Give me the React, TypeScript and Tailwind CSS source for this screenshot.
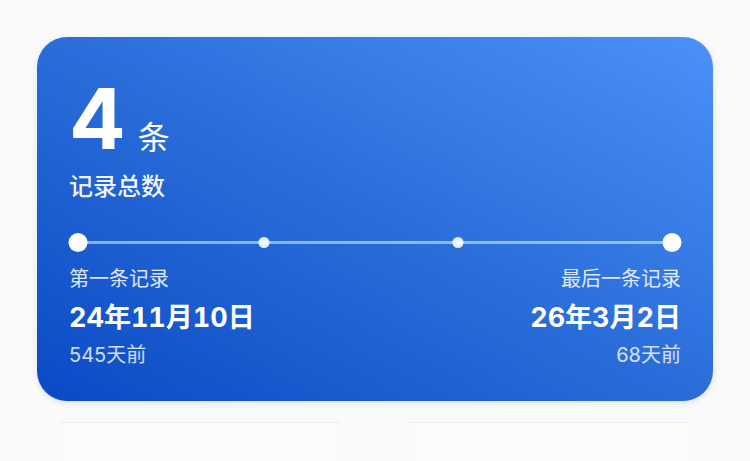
import React from "react";

const dots = [
  { pos: 0, big: true },
  { pos: 31.3, big: false },
  { pos: 64.0, big: false },
  { pos: 100, big: true },
];

export default function App() {
  return (
    <div
      className="w-[750px] h-[461px] overflow-hidden bg-[#fafafa] pt-[37px] px-[37px]"
      style={{ fontFamily: 'Inter, "Noto Sans CJK SC", sans-serif' }}
    >
      <div className="h-[364px] rounded-[30px] bg-linear-to-tr from-[#0a49c5] via-[#2a6dd9] to-[#4b91f8] px-8 pt-[40px] text-white shadow-[0_2px_6px_rgba(20,60,160,0.12)]">
        <div className="flex items-baseline leading-none">
          <span className="text-[84px] font-bold leading-none">4</span>
          <span className="ml-[12px] text-[32px] font-normal leading-none">条</span>
        </div>
        <div className="mt-[14px] text-[24px] font-medium leading-none text-white/95">记录总数</div>

        <div className="relative mt-[34px] h-[19px]">
          <div className="absolute left-[9px] right-[9px] top-[8px] h-[3px] rounded-full bg-white/50" />
          <div className="absolute left-[9px] right-[9px] top-0 h-[19px]">
            {dots.map((d, i) => (
              <div
                key={i}
                className={
                  d.big
                    ? "absolute top-0 h-[19px] w-[19px] -translate-x-1/2 rounded-full bg-white"
                    : "absolute top-[4px] h-[11px] w-[11px] -translate-x-1/2 rounded-full bg-white/90"
                }
                style={{ left: `${d.pos}%` }}
              />
            ))}
          </div>
        </div>

        <div className="mt-[17px] flex justify-between">
          <div className="flex flex-col">
            <span className="text-[20px] leading-none text-white/85">第一条记录</span>
            <span className="mt-[15px] text-[27px] font-bold leading-none tabular-nums">24年11月10日</span>
            <span className="mt-[14px] text-[20px] leading-none text-white/80">545天前</span>
          </div>
          <div className="flex flex-col items-end">
            <span className="text-[20px] leading-none text-white/85">最后一条记录</span>
            <span className="mt-[15px] text-[27px] font-bold leading-none tabular-nums">26年3月2日</span>
            <span className="mt-[14px] text-[20px] leading-none text-white/80">68天前</span>
          </div>
        </div>
      </div>

      <div className="mt-[21px] flex justify-between px-[23px]">
        <div className="h-[40px] w-[280px] border-t border-[#ececec] bg-[#fbfbfb]" />
        <div className="h-[40px] w-[280px] border-t border-[#ececec] bg-[#fbfbfb]" />
      </div>
    </div>
  );
}
